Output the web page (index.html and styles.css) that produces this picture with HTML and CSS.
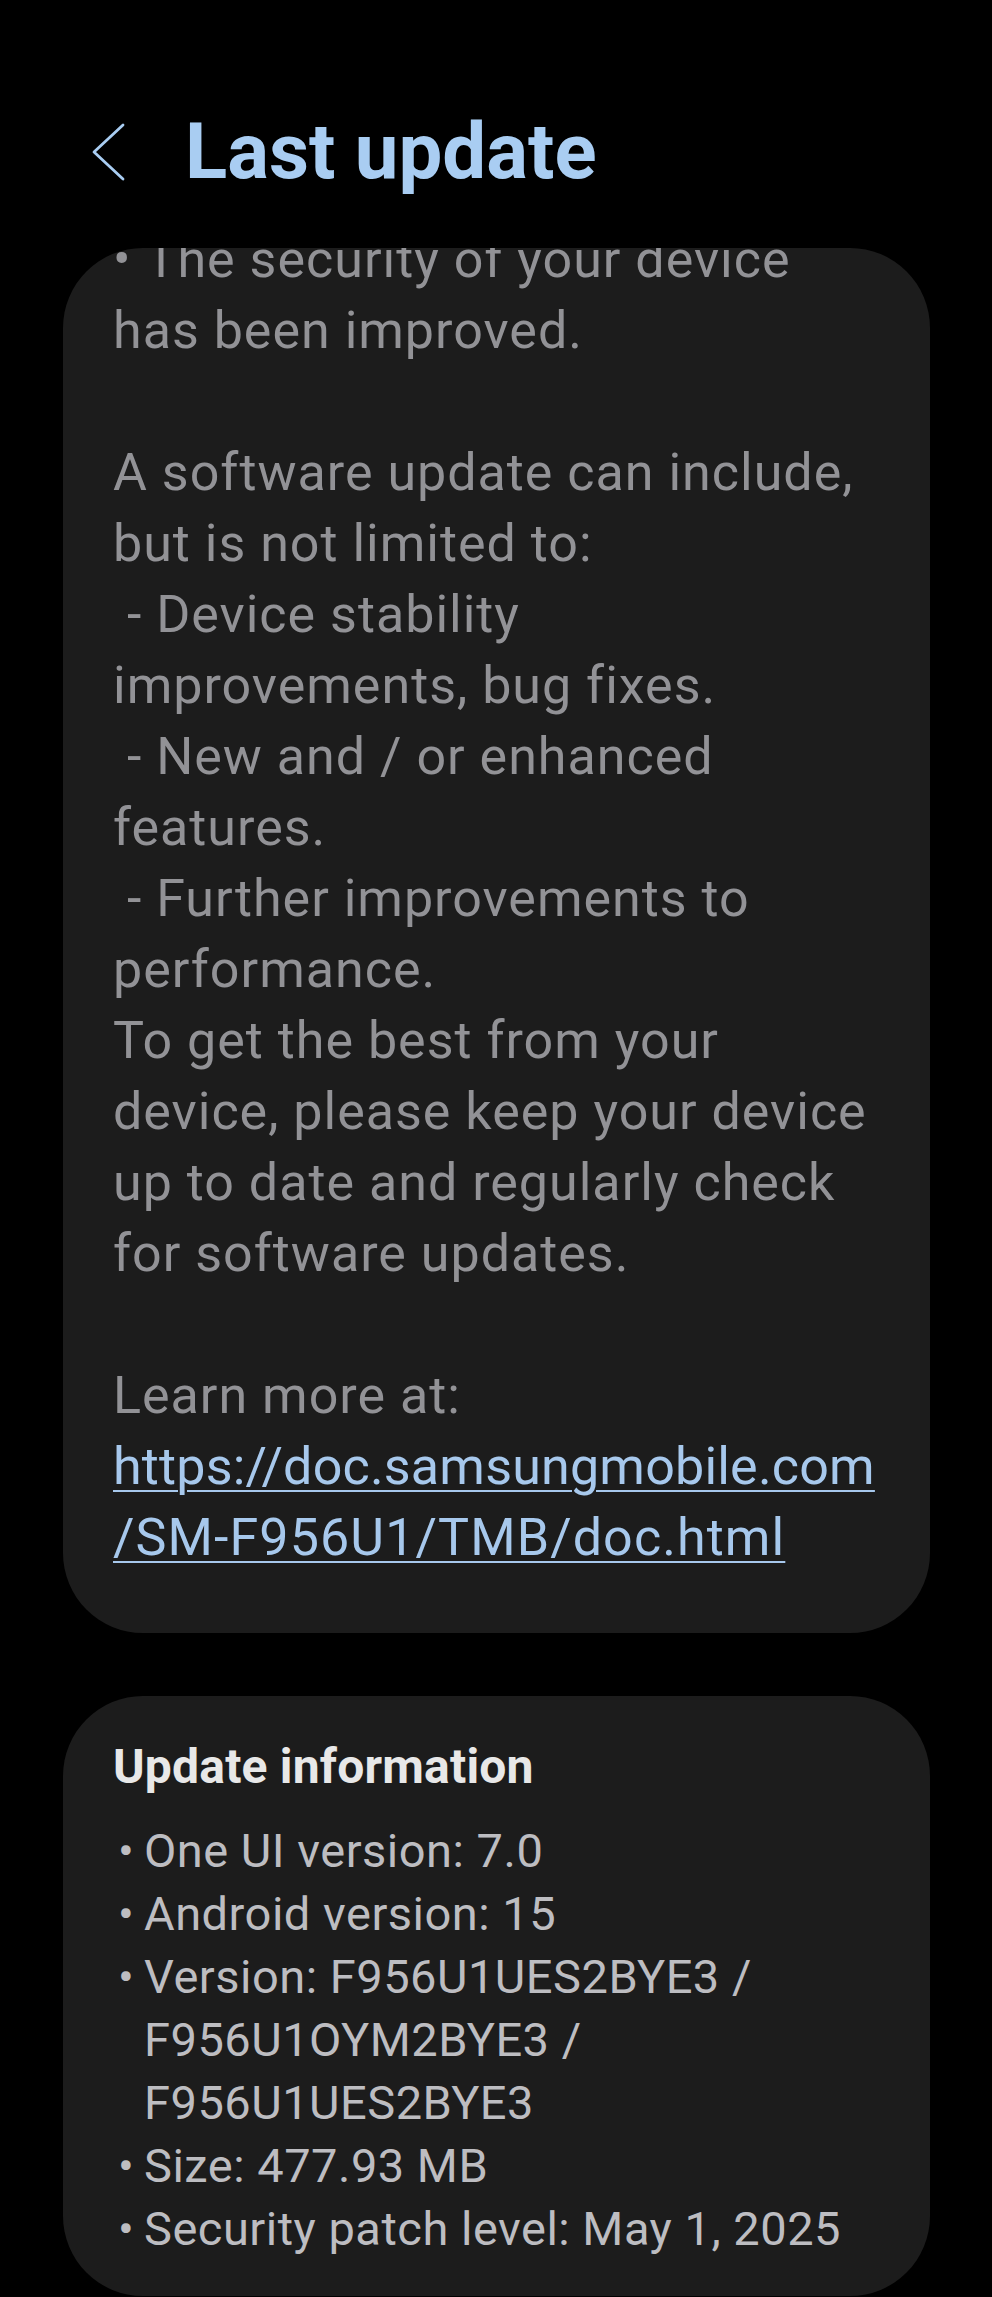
FILE: index.html
```html
<!DOCTYPE html>
<html lang="en">
<head>
<meta charset="utf-8">
<title>Last update</title>
<link rel="stylesheet" href="styles.css">
</head>
<body>
<header class="appbar">
  <svg class="back" width="34" height="58" viewBox="0 0 34 58" aria-hidden="true">
    <polyline points="31,2 2,29 31,56" fill="none" stroke="#a9cdf2" stroke-width="2.8" stroke-linecap="round" stroke-linejoin="round"/>
  </svg>
  <h1 class="title">Last update</h1>
</header>

<section class="card notes">
  <div class="notes-text">
    •&nbsp;The security of your device<br>
    has been improved.<br>
    <br>
    A software update can include,<br>
    but is not limited to:<br>
    &nbsp;- Device stability<br>
    improvements, bug fixes.<br>
    &nbsp;- New and / or enhanced<br>
    features.<br>
    &nbsp;- Further improvements to<br>
    performance.<br>
    To get the best from your<br>
    device, please keep your device<br>
    up to date and regularly check<br>
    for software updates.<br>
    <br>
    Learn more at:<br>
    <a class="link" href="#">https://doc.samsungmobile.com<br><span class="link-tail">/SM-F956U1/TMB/doc.html</span></a>
  </div>
</section>

<section class="card info">
  <h2 class="info-title">Update information</h2>
  <ul class="info-list">
    <li><span class="dot">•</span><span>One UI version: 7.0</span></li>
    <li><span class="dot">•</span><span>Android version: 15</span></li>
    <li><span class="dot">•</span><span>Version: F956U1UES2BYE3 /<br>F956U1OYM2BYE3 /<br>F956U1UES2BYE3</span></li>
    <li><span class="dot">•</span><span>Size: 477.93 MB</span></li>
    <li><span class="dot">•</span><span>Security patch level: May 1, 2025</span></li>
  </ul>
</section>
</body>
</html>
```

FILE: styles.css
```css
html, body {
  margin: 0;
  padding: 0;
  background: #000;
}

body {
  font-family: Roboto, "Liberation Sans", sans-serif;
  width: 992px;
  height: 2297px;
  overflow: hidden;
}

.appbar {
  display: flex;
  align-items: center;
  padding: 107px 0 0 92px;
  height: 90px;
  margin-bottom: 51px;
}

.back {
  display: block;
  flex: none;
}

.title {
  margin: 0 0 0 59px;
  font-size: 78px;
  line-height: 90px;
  font-weight: 700;
  color: #a9cdf2;
}

.card {
  background: #1c1c1c;
  border-radius: 80px;
  margin: 0 62px 0 63px;
  overflow: hidden;
}

.notes {
  padding: 0 50px 60px;
}

.notes-text {
  margin-top: -24px;
  font-size: 52px;
  line-height: 71px;
  letter-spacing: 1px;
  color: #929296;
  white-space: nowrap;
}

.link {
  color: #a7c8ec;
  letter-spacing: 0.2px;
  text-decoration: underline;
  text-decoration-thickness: 2px;
  text-underline-offset: 6px;
}

.link-tail {
  letter-spacing: 1.1px;
}

.info {
  margin-top: 63px;
  padding: 40px 50px 36px;
}

.info-title {
  margin: 0 0 21px;
  font-size: 48px;
  line-height: 62px;
  font-weight: 700;
  letter-spacing: 0.2px;
  color: #e8e8e8;
}

.info-list {
  list-style: none;
  margin: 0;
  padding: 0;
  font-size: 47px;
  line-height: 63px;
  letter-spacing: 0.5px;
  color: #bdbdc1;
  white-space: nowrap;
}

.info-list li {
  display: flex;
}

.dot {
  flex: none;
  width: 26px;
  padding-left: 5px;
  letter-spacing: 0;
}
```
